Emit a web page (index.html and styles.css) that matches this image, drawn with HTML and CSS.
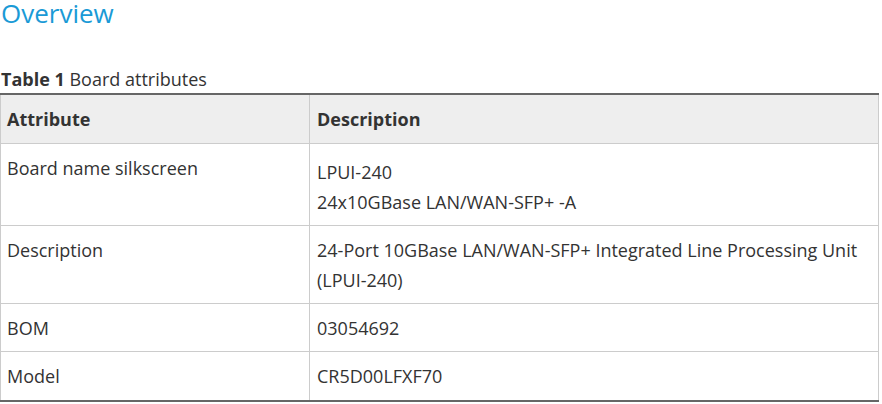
FILE: index.html
```html
<!DOCTYPE html>
<html>
<head>
<meta charset="utf-8">
<link rel="stylesheet" href="styles.css">
</head>
<body>
<h1 class="title">Overview</h1>
<table class="attrs">
  <caption class="cap"><b>Table 1</b> Board attributes</caption>
  <colgroup><col class="c1"><col class="c2"></colgroup>
  <thead>
    <tr><th>Attribute</th><th>Description</th></tr>
  </thead>
  <tbody>
    <tr class="r1"><td>Board name silkscreen</td><td><p class="p p-first">LPUI-240</p><p class="p">24x10GBase LAN/WAN-SFP+ -A</p></td></tr>
    <tr class="r2"><td>Description</td><td>24-Port 10GBase LAN/WAN-SFP+ Integrated Line Processing Unit (LPUI-240)</td></tr>
    <tr><td>BOM</td><td>03054692</td></tr>
    <tr class="last"><td>Model</td><td>CR5D00LFXF70</td></tr>
  </tbody>
</table>
</body>
</html>
```

FILE: styles.css
```css
html, body {
  margin: 0;
  padding: 0;
  background: #fff;
}
body {
  font-family: "Open Sans", "Noto Sans", sans-serif;
  color: #333;
  font-size: 18px;
}
.title {
  margin: 0 0 0 1px;
  font-size: 26px;
  line-height: 26px;
  font-weight: normal;
  color: #1a9ad6;
  height: 66px;
}
.attrs {
  border-collapse: collapse;
  width: 879px;
  border-top: 2px solid #666;
  border-bottom: 2px solid #666;
  border-left: 1px solid #ccc;
  border-right: 1px solid #ccc;
}
.cap {
  caption-side: top;
  text-align: left;
  font-size: 18px;
  line-height: 26px;
  color: #333;
  padding: 0 0 1px 1px;
}
.c1 { width: 309px; }
th, td {
  border: 1px solid #ccc;
  padding: 9px 7px 8px 7px;
  line-height: 30px;
  text-align: left;
  vertical-align: middle;
}
th:first-child, td:first-child {
  padding-left: 6px;
}
th {
  background: #eee;
  font-weight: bold;
  padding-bottom: 9px;
}
.r1 td, .r2 td {
  vertical-align: top;
}
.p {
  margin: 0;
}
.p-first {
  margin-top: 4px;
}
.last td {
  padding-bottom: 9px;
}
```
